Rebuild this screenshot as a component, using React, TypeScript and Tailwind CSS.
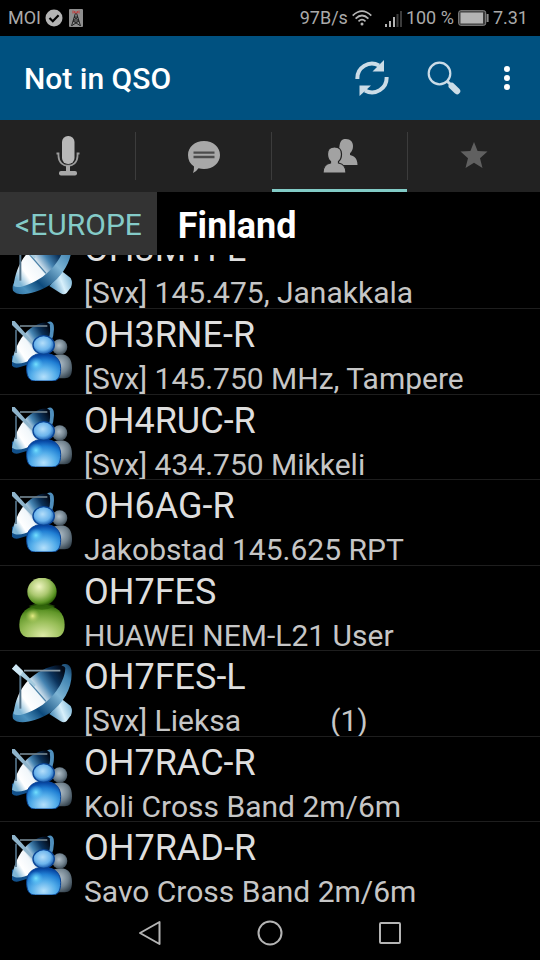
type StationKind = 'link' | 'repeater' | 'user';

type Station = {
  call: string;
  info: string;
  kind: StationKind;
};

const stations: Station[] = [
  { call: 'OH3RNE-R', info: '[Svx] 145.750 MHz, Tampere', kind: 'repeater' },
  { call: 'OH4RUC-R', info: '[Svx] 434.750 Mikkeli', kind: 'repeater' },
  { call: 'OH6AG-R', info: 'Jakobstad 145.625 RPT', kind: 'repeater' },
  { call: 'OH7FES', info: 'HUAWEI NEM-L21 User', kind: 'user' },
  { call: 'OH7FES-L', info: '[Svx] Lieksa            (1)', kind: 'link' },
  { call: 'OH7RAC-R', info: 'Koli Cross Band 2m/6m', kind: 'repeater' },
  { call: 'OH7RAD-R', info: 'Savo Cross Band 2m/6m', kind: 'repeater' },
];

// Gradients shared by all the station icons
function IconDefs() {
  return (
    <svg className="absolute size-0" aria-hidden="true">
      <defs>
        <linearGradient id="bowl" x1="0" y1="0.75" x2="0.95" y2="0.1">
          <stop offset="0" stopColor="#7fb6d6" />
          <stop offset="0.18" stopColor="#ffffff" />
          <stop offset="0.42" stopColor="#f0f6fa" />
          <stop offset="0.62" stopColor="#4584b2" />
          <stop offset="0.8" stopColor="#0b335c" />
          <stop offset="1" stopColor="#020a18" />
        </linearGradient>
        <linearGradient id="rim" x1="0" y1="1" x2="1" y2="0">
          <stop offset="0" stopColor="#2a6c9c" />
          <stop offset="0.15" stopColor="#4a90bd" />
          <stop offset="0.32" stopColor="#0d4a7c" />
          <stop offset="0.62" stopColor="#7db4d4" />
          <stop offset="0.85" stopColor="#3d81af" />
          <stop offset="1" stopColor="#0d3359" />
        </linearGradient>
        <linearGradient id="foot" x1="0" y1="0.7" x2="1" y2="0.3">
          <stop offset="0" stopColor="#3b83b3" />
          <stop offset="0.55" stopColor="#d8f0fb" />
          <stop offset="1" stopColor="#7db6d6" />
        </linearGradient>
        <radialGradient id="blueHead" cx="0.45" cy="0.4" r="0.62">
          <stop offset="0" stopColor="#b4defa" />
          <stop offset="0.6" stopColor="#6bb4ec" />
          <stop offset="1" stopColor="#0b4ea6" />
        </radialGradient>
        <radialGradient id="blueBody" cx="0.5" cy="0.85" r="0.8">
          <stop offset="0" stopColor="#b4e0fb" />
          <stop offset="0.45" stopColor="#55aeea" />
          <stop offset="0.75" stopColor="#2180d4" />
          <stop offset="1" stopColor="#0545a2" />
        </radialGradient>
        <radialGradient id="blueGlow">
          <stop offset="0" stopColor="#74e2ff" />
          <stop offset="1" stopColor="#4fb8f4" stopOpacity="0" />
        </radialGradient>
        <radialGradient id="greyPart" cx="0.45" cy="0.4" r="0.65">
          <stop offset="0" stopColor="#b0bec8" />
          <stop offset="0.6" stopColor="#71828e" />
          <stop offset="1" stopColor="#35434e" />
        </radialGradient>
        <radialGradient id="greenHead" cx="0.4" cy="0.32" r="0.68">
          <stop offset="0" stopColor="#f0f6c2" />
          <stop offset="0.5" stopColor="#abc870" />
          <stop offset="0.85" stopColor="#5b9324" />
          <stop offset="1" stopColor="#2d6008" />
        </radialGradient>
        <radialGradient id="greenBody" cx="0.52" cy="0.95" r="0.9">
          <stop offset="0" stopColor="#dde9a6" />
          <stop offset="0.5" stopColor="#98be58" />
          <stop offset="0.85" stopColor="#609628" />
          <stop offset="1" stopColor="#33690c" />
        </radialGradient>
        <radialGradient id="greenGlow">
          <stop offset="0" stopColor="#e8ee86" />
          <stop offset="1" stopColor="#a0c050" stopOpacity="0" />
        </radialGradient>
      </defs>
    </svg>
  );
}

function LinkIcon() {
  return (
    <>
      <path d="M112 150 L150 106 L176 126 Q183 140 177 154 L164 171 Q156 178 146 172 Z" fill="url(#foot)" />
      <path
        d="M3 164 C-1 150 6 134 20 126 C70 110 130 60 150 2 C160 -3 175 0 178 18 C184 64 158 116 112 148 C70 174 18 184 3 164 Z"
        fill="url(#rim)"
      />
      <path
        d="M5 150 C10 96 38 44 88 20 C120 2 154 -2 160 12 C158 54 126 98 92 122 C60 144 20 160 5 150 Z"
        fill="url(#bowl)"
      />
      <path d="M25 28 V134" stroke="#53738a" strokeWidth="6" fill="none" />
      <path d="M36 20 H145" stroke="#8799a5" strokeWidth="5" fill="none" />
      <path d="M52 55 L102 112" stroke="#4c82a8" strokeWidth="4" />
      <path d="M0 14 L12 1 L72 62 L68 68 Z" fill="#a5cbdf" />
      <path d="M0 14 L12 1 L34 22 L24 36 Z" fill="#cfe8f4" />
    </>
  );
}

function RepeaterIcon() {
  return (
    <>
      <path d="M0 104 V134 Q8 144 24 138 L64 126 L76 92 Z" fill="#12508a" />
      <path d="M106 4 Q120 -4 125 12 Q129 40 116 66 L98 60 Q112 34 106 4 Z" fill="#4f8fbd" />
      <path
        d="M0 122 C8 82 26 42 58 20 C84 4 106 0 113 10 C118 38 110 66 88 92 C64 116 24 138 0 122 Z"
        fill="url(#bowl)"
      />
      <path d="M12 26 V96" stroke="#53738a" strokeWidth="5" />
      <path d="M24 15 H106" stroke="#71848f" strokeWidth="5" />
      <path d="M0 12 V0 H8 L68 68 L63 74 Z" fill="#8fb4cb" />
      <path d="M112 138 C112 112 122 100 146 100 C170 100 180 116 180 142 C180 164 172 172 158 172 H122 Z" fill="url(#greyPart)" />
      <circle cx="143" cy="78" r="23" fill="url(#greyPart)" />
      <path
        d="M44 142 C44 114 62 97 95 97 C128 97 146 114 146 142 C146 168 138 180 120 180 H70 C52 180 44 168 44 142 Z"
        fill="url(#blueBody)"
        stroke="#0a4596"
        strokeWidth="3"
      />
      <circle cx="72" cy="130" r="22" fill="url(#blueGlow)" />
      <ellipse cx="95" cy="72" rx="32" ry="28" fill="url(#blueHead)" stroke="#0a4596" strokeWidth="4" />
    </>
  );
}

function UserIcon() {
  return (
    <>
      <path
        d="M22 140 C22 104 46 80 90 80 C134 80 158 104 158 140 C158 166 148 178 126 178 H54 C32 178 22 166 22 140 Z"
        fill="url(#greenBody)"
      />
      <circle cx="62" cy="114" r="22" fill="url(#greenGlow)" />
      <path d="M50 84 Q90 106 130 84 Q90 66 50 84 Z" fill="#2f620a" opacity="0.7" />
      <ellipse cx="90" cy="41" rx="44" ry="42" fill="url(#greenHead)" />
    </>
  );
}

function StationIcon({ kind }: { kind: StationKind }) {
  return (
    <svg viewBox="0 0 180 180" className="mx-3 size-15 shrink-0" aria-hidden="true">
      {kind === 'link' && <LinkIcon />}
      {kind === 'repeater' && <RepeaterIcon />}
      {kind === 'user' && <UserIcon />}
    </svg>
  );
}

function StationRow({ call, info, kind }: Station) {
  return (
    <button type="button" className="flex size-full items-center overflow-hidden text-left">
      <StationIcon kind={kind} />
      <span className="flex h-full min-w-0 flex-1 flex-col whitespace-pre">
        <span className="text-[36px] leading-[52px] text-[#dedede]">{call}</span>
        <span className="text-[30px] leading-9 text-[#c6c6c6]">{info}</span>
      </span>
    </button>
  );
}

function StatusBar() {
  return (
    <div className="flex h-9 items-center justify-between bg-black pr-3 pl-2 text-lg text-[#aaaaaa]">
      <div className="flex items-center">
        <span>MOI</span>
        <svg viewBox="0 0 18 18" className="ml-1 size-[18px]" aria-hidden="true">
          <circle cx="9" cy="9" r="8.5" fill="#b4b4b4" />
          <path d="M4.5 9 L7.8 12.2 L13.6 6.2" fill="none" stroke="#000" strokeWidth="2.2" />
        </svg>
        <svg viewBox="0 0 14 18" className="ml-1.5 h-[18px] w-3.5" aria-hidden="true">
          <rect width="14" height="18" rx="1" fill="#8e8e8e" />
          <path d="M6.5 4 L2.5 17 M7.5 4 L11.5 17 M5.5 8 H8.5 M5 8 L10 12 M9 8 L4 12 L11 16.5 M10 12 L3 16.5 M4 12 H10" fill="none" stroke="#222" strokeWidth="1" />
          <path d="M4 1.5 V4.5 M5.6 2 V4 M8.4 2 V4 M10 1.5 V4.5 M7 2.5 V5" stroke="#c43a3a" strokeWidth="1" />
        </svg>
      </div>
      <div className="flex items-center">
        <span>97B/s</span>
        <svg viewBox="0 0 20 16" className="ml-1 h-4 w-5" fill="none" stroke="#b4b4b4" strokeWidth="1.7" aria-hidden="true">
          <path d="M0.7 5.6 Q10 -3.4 19.3 5.6" />
          <path d="M3.6 8.6 Q10 2.4 16.4 8.6" />
          <path d="M6.5 11.4 Q10 8 13.5 11.4" />
          <circle cx="10" cy="14" r="1.5" fill="#b4b4b4" stroke="none" />
        </svg>
        <svg viewBox="0 0 18 17" className="ml-3 h-[17px] w-[18px]" aria-hidden="true">
          <path d="M1 14h2v3H1z M5 11h2v6H5z M9 7h2v10H9z" fill="#b4b4b4" />
          <path d="M12.5 4h2v13h-2z M16 1h2v16h-2z" fill="#3c3c3c" />
        </svg>
        <span className="ml-1">100 %</span>
        <svg viewBox="0 0 31 16" className="ml-1 h-4 w-[31px]" aria-hidden="true">
          <rect x="0.7" y="0.7" width="27" height="14.6" rx="2" fill="#3c3c3c" stroke="#8c8c8c" strokeWidth="1" />
          <rect x="2.5" y="2.5" width="22.5" height="11" fill="#b4b4b4" />
          <rect x="28.6" y="4" width="2" height="8" fill="#8c8c8c" />
        </svg>
        <span className="ml-1">7.31</span>
      </div>
    </div>
  );
}

function ActionBar() {
  return (
    <header className="flex h-21 items-center bg-[#005180] pl-6">
      <h1 className="flex-1 text-[30px] font-medium text-white">Not in QSO</h1>
      <button type="button" aria-label="Refresh" className="flex h-full w-18 items-center justify-center">
        <svg viewBox="0 0 34 36" className="h-9 w-[34px]" aria-hidden="true">
          <path d="M2.4 19 A14.6 14.6 0 0 1 24 5.4" fill="none" stroke="#cbdce7" strokeWidth="4" />
          <path d="M29 0 V11.5 H17.5 Z" fill="#cbdce7" />
          <path d="M31.6 17 A14.6 14.6 0 0 1 10 30.6" fill="none" stroke="#cbdce7" strokeWidth="4" />
          <path d="M4.5 36 V25.5 H16 Z" fill="#cbdce7" />
        </svg>
      </button>
      <button type="button" aria-label="Search" className="flex h-full w-18 items-center justify-center">
        <svg viewBox="0 0 34 34" className="size-[34px]" aria-hidden="true">
          <circle cx="12.5" cy="12.5" r="10.8" fill="none" stroke="#cbdce7" strokeWidth="2.2" />
          <path d="M20 20 L24 24" stroke="#cbdce7" strokeWidth="3" />
          <path d="M24.8 25 L30 30" stroke="#cbdce7" strokeWidth="6.5" strokeLinecap="round" />
        </svg>
      </button>
      <button type="button" aria-label="More options" className="flex h-full w-15 items-center justify-center pr-1.5">
        <svg viewBox="0 0 6 24" className="h-6 w-1.5" fill="#fff" aria-hidden="true">
          <circle cx="3" cy="3" r="3" />
          <circle cx="3" cy="12" r="3" />
          <circle cx="3" cy="21" r="3" />
        </svg>
      </button>
    </header>
  );
}

function TabDivider() {
  return <span className="h-12 w-px shrink-0 self-center bg-[#3c3c3c]" />;
}

function Tabs() {
  const tab = 'flex items-center justify-center border-y-3 border-t-transparent';

  return (
    <nav className="flex h-18 bg-[#222222]">
      <button type="button" aria-label="Talk" className={`${tab} w-1/4 shrink-0 border-b-transparent`}>
        <svg viewBox="0 0 24 40" className="h-10 w-6" aria-hidden="true">
          <rect x="6" y="0" width="12.5" height="28" rx="6" fill="#b8b8b8" />
          <path d="M0.5 17.5 H2.5 V20 C2.5 33 21.5 33 21.5 20 V17.5 H23.5" fill="none" stroke="#9c9c9c" strokeWidth="1.8" />
          <path d="M10 30 H14 V35 H10 Z" fill="#a8a8a8" />
          <rect x="3" y="35" width="18" height="4.5" rx="2" fill="#a8a8a8" />
        </svg>
      </button>
      <TabDivider />
      <button type="button" aria-label="Messages" className={`${tab} w-1/4 shrink-0 border-b-transparent`}>
        <svg viewBox="0 -1 34 34" className="size-[34px]" aria-hidden="true">
          <path d="M17 1 C26 1 33 7 33 15 C33 23 26 29 17 29 Q14 29 11.5 28.3 Q9.5 31.5 6 33 Q7.2 29.5 7 26.5 C3 24 1 20 1 15 C1 7 8 1 17 1 Z" fill="#a8a8a8" />
          <path d="M6.5 12.6 H27.5 M6.5 17 H27.5" stroke="#4c4c4c" strokeWidth="2.4" />
        </svg>
      </button>
      <TabDivider />
      <button type="button" aria-label="Stations" aria-current="page" className={`${tab} w-1/4 shrink-0 border-b-[#82cbc6]`}>
        <svg viewBox="0 0 36 36" className="size-9" fill="#a2a2a2" aria-hidden="true">
          <path d="M24 1 C28.5 1 31 4 31 8 C31 11 30 13.5 28 15.2 V17 C32 18 35.5 20 35.5 27 H17 V14 C17.5 3 19 1 24 1 Z" />
          <path d="M12.5 9 C17 9 19.5 12 19.5 16 C19.5 19.5 18.5 22 16.5 23.5 V25 C21 26 24 28 24 35 H1 C1 28 4 26 8.5 25 V23.5 C6.5 22 5.5 19.5 5.5 16 C5.5 12 8 9 12.5 9 Z" stroke="#222" strokeWidth="1.2" />
        </svg>
      </button>
      <TabDivider />
      <button type="button" aria-label="Favourites" className={`${tab} flex-1 border-b-transparent`}>
        <svg viewBox="0 1 28 28" className="size-7" aria-hidden="true">
          <path d="M14 1 L17.6 10 L27.5 10.5 L20 17.2 L22.5 27 L14 21.8 L5.5 27 L8 17.2 L0.5 10.5 L10.4 10 Z" fill="#606060" />
        </svg>
      </button>
    </nav>
  );
}

function NavigationBar() {
  const item = 'flex h-full w-30 items-center justify-center';

  return (
    <footer className="flex h-13 shrink-0 items-center justify-center bg-black pb-0.5">
      <button type="button" aria-label="Back" className={item}>
        <svg viewBox="0 0 24 26" className="h-[26px] w-6" fill="none" stroke="#b4b4b4" strokeWidth="2" strokeLinejoin="round" aria-hidden="true">
          <path d="M21.5 2 V24 L2 13 Z" />
        </svg>
      </button>
      <button type="button" aria-label="Home" className={item}>
        <svg viewBox="0 0 26 26" className="size-[26px]" fill="none" stroke="#b4b4b4" strokeWidth="2" aria-hidden="true">
          <circle cx="13" cy="13" r="11.5" />
        </svg>
      </button>
      <button type="button" aria-label="Recent apps" className={item}>
        <svg viewBox="0 0 24 24" className="size-6" fill="none" stroke="#b4b4b4" strokeWidth="2" aria-hidden="true">
          <rect x="2" y="2" width="20" height="20" rx="1" />
        </svg>
      </button>
    </footer>
  );
}

export default function App() {
  return (
    <div className="flex min-h-screen flex-col bg-black font-[Roboto,sans-serif]">
      <IconDefs />
      <StatusBar />
      <ActionBar />
      <Tabs />

      <div className="flex h-[63px] items-stretch">
        <button type="button" className="bg-[#333333] px-[15px] pt-0.5 text-[30px] text-[#84cbc8]">
          &lt;EUROPE
        </button>
        <h2 className="flex items-center pt-1 pl-[21px] text-[36px] font-bold text-white">Finland</h2>
      </div>

      <ul className="flex flex-1 flex-col">
        {/* Scrolled halfway under the region bar */}
        <li className="flex h-[54px] flex-col justify-end overflow-hidden border-b border-[#1e1e1e]">
          <div className="h-[85px] shrink-0">
            <StationRow call="OH3MTI-L" info="[Svx] 145.475, Janakkala" kind="link" />
          </div>
        </li>
        {stations.map((station) => (
          <li key={station.call} className="h-[85px] flex-auto border-b border-[#1e1e1e] last:border-transparent">
            <StationRow {...station} />
          </li>
        ))}
      </ul>

      <NavigationBar />
    </div>
  );
}
